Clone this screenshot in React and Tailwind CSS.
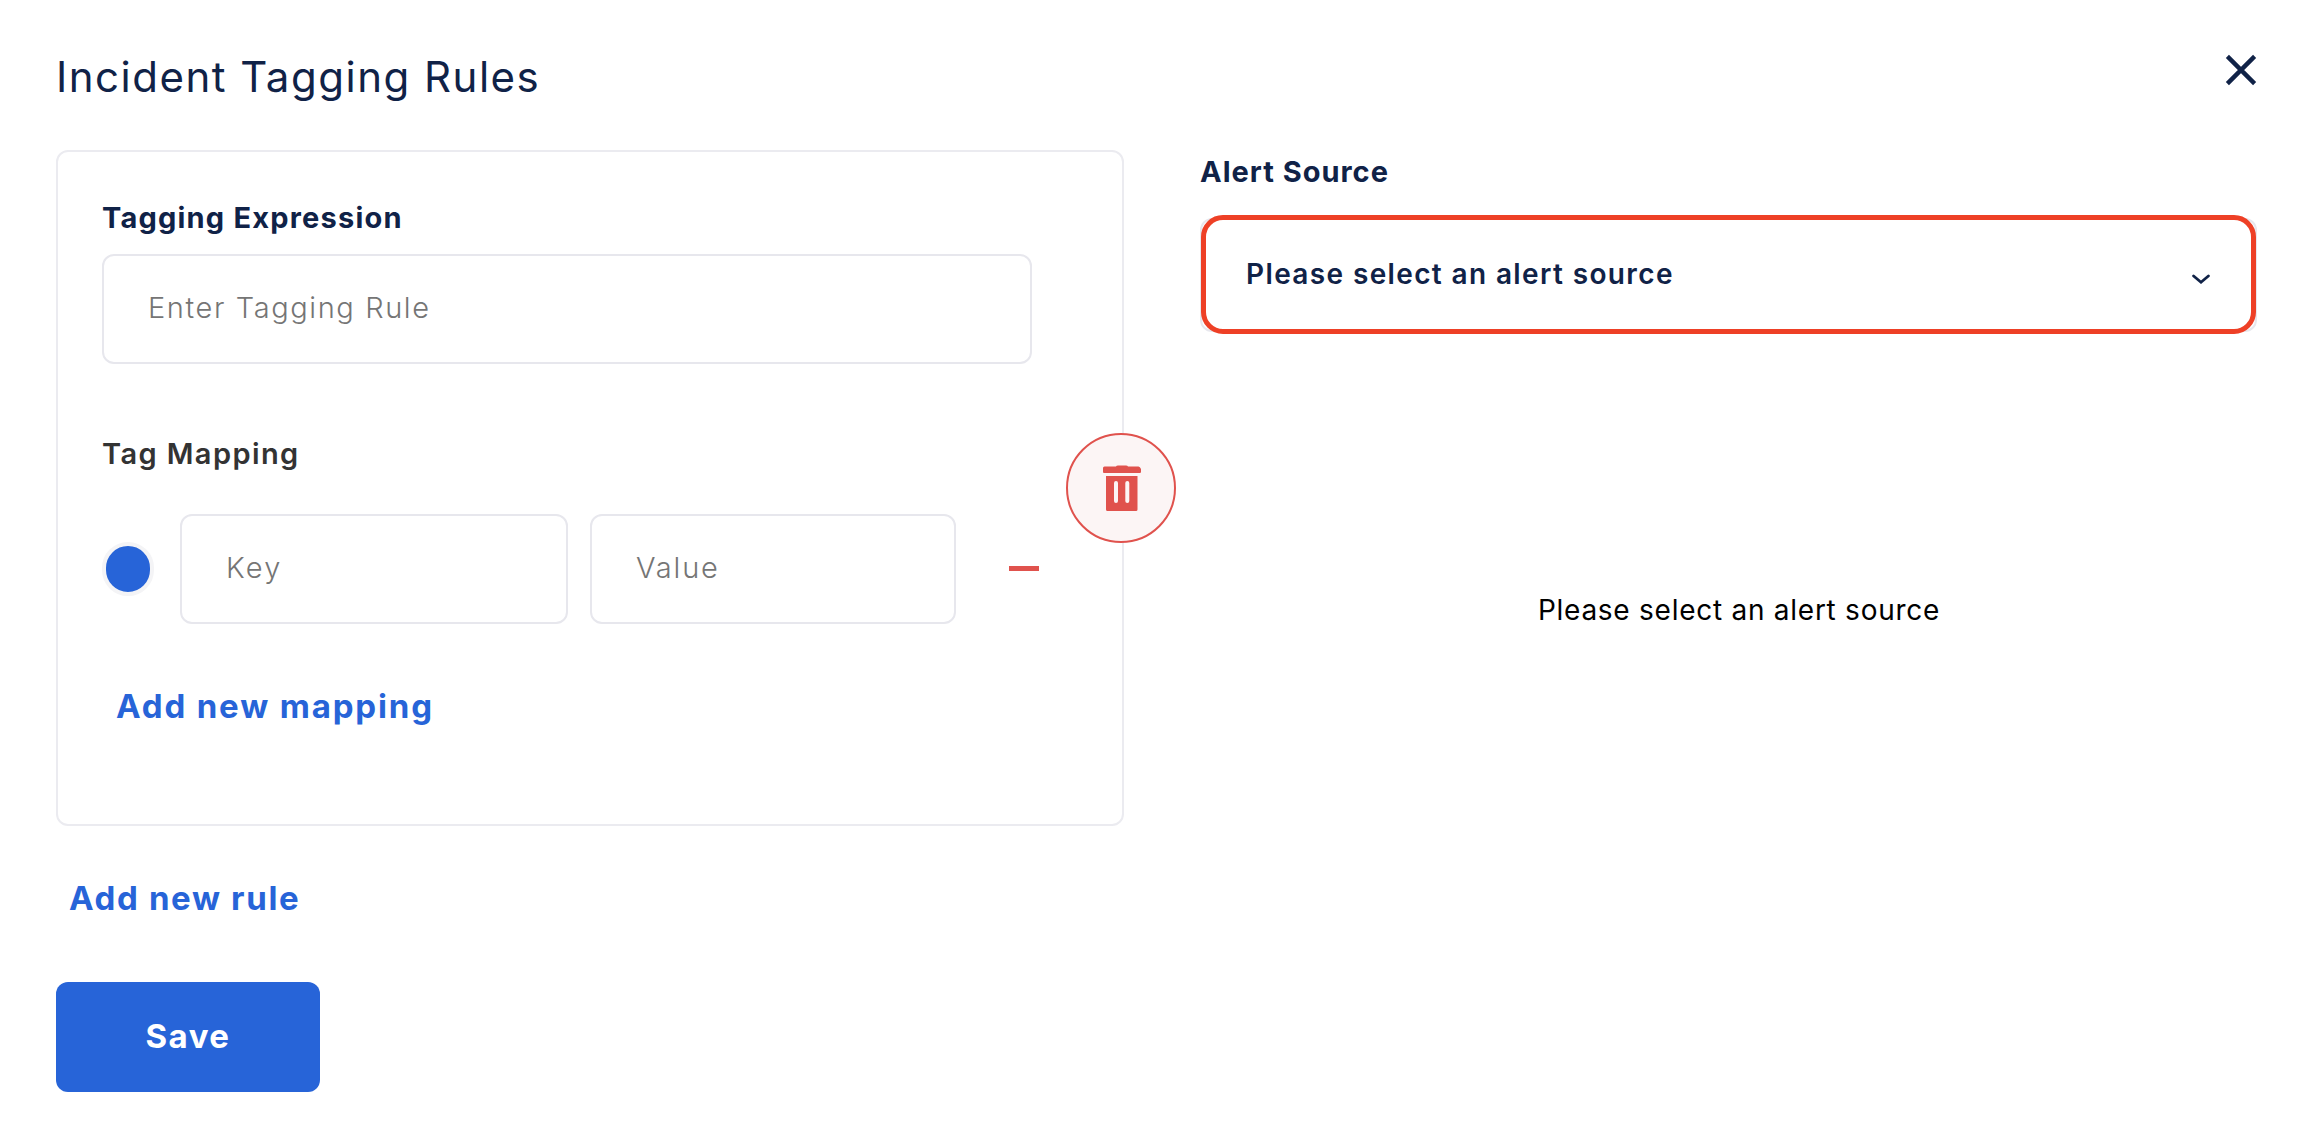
import React from "react";

const field =
  "h-[110px] rounded-xl border-2 border-[#e7e7ed] bg-white pl-[44px] pr-4 pb-[3px] text-[29px] text-[#222] outline-none placeholder:font-[350] placeholder:text-[#757575] placeholder:opacity-100";

function CloseIcon() {
  return (
    <svg width="32" height="32" viewBox="0 0 32 32" fill="none" stroke="#102247" strokeWidth="4.4">
      <path d="M2.4 2.4 29.6 29.6M29.6 2.4 2.4 29.6" />
    </svg>
  );
}

function ChevronIcon() {
  return (
    <svg width="18" height="11" viewBox="0 0 18 11" fill="none" stroke="#102247" strokeWidth="2.8" strokeLinecap="round">
      <path d="M1.6 2 9 8.2 16.4 2" />
    </svg>
  );
}

function TrashIcon() {
  return (
    <svg width="38" height="46" viewBox="0 0 38 46" fill="#e0524d">
      <path d="M13 1.6Q13.4 0.5 15 0.5H23Q24.6 0.5 25 1.6H35.5Q37 1.8 38 4V6.5Q38 8 37 8H1Q0 8 0 7V3Q0 1.8 1.5 1.6Z" />
      <path
        fillRule="evenodd"
        d="M3 11H34.5V44.5Q34.5 46 33 46H4.5Q3 46 3 44.5ZM13 16Q11 16 11 18V36Q11 38 13 38Q15 38 15 36V18Q15 16 13 16ZM24.3 16Q22.3 16 22.3 18V36Q22.3 38 24.3 38Q26.3 38 26.3 36V18Q26.3 16 24.3 16Z"
      />
    </svg>
  );
}

function RuleCard() {
  return (
    <div className="relative flex h-[676px] flex-col rounded-xl border-2 border-[#ebebf0] pt-12 pl-[44px]">
      <label className="h-[35px] text-[29px] leading-[35px] font-bold tracking-[1.2px] text-[#102247]">
        Tagging Expression
      </label>
      <input className={`${field} mt-[19px] w-[930px] tracking-[1.6px]`} placeholder="Enter Tagging Rule" />

      <div className="mt-[72px] h-9 text-[29px] leading-9 font-semibold tracking-[1.4px] text-[#333]">Tag Mapping</div>

      <div className="mt-[42px] flex items-center">
        <span className="h-[54px] w-[52px] rounded-full border-4 border-[#f4f4f6] bg-[#2764d8]" />
        <input className={`${field} ml-[26px] w-[388px] tracking-[2.2px]`} placeholder="Key" />
        <input className={`${field} ml-[22px] w-[366px] tracking-[1.8px]`} placeholder="Value" />
        <button className="mb-[2px] ml-[53px] h-[5px] w-[30px] bg-[#e0524d]" aria-label="Remove mapping" />
      </div>

      <button className="mt-[62px] ml-[14px] h-10 self-start text-[33px] leading-10 font-bold tracking-[1.85px] text-[#2764d8]">
        Add new mapping
      </button>

      <button
        className="absolute top-[281px] -right-[54px] flex size-[110px] items-center justify-center rounded-full border-2 border-[#e0524d] bg-[#fcf5f5] pl-[2px]"
        aria-label="Delete rule"
      >
        <TrashIcon />
      </button>
    </div>
  );
}

function AlertSource() {
  return (
    <section className="flex w-[1057px] flex-col pt-1">
      <h2 className="h-9 text-[29px] leading-9 font-bold tracking-[1px] text-[#102247]">Alert Source</h2>
      <div className="relative mt-7 flex h-[114px] items-center justify-between rounded-xl border-2 border-[#e7e7ed] pr-[45px] pb-[3px] pl-[44px]">
        <span className="text-[28px] leading-9 font-semibold tracking-[1.37px] text-[#102247]">
          Please select an alert source
        </span>
        <span className="mt-3">
          <ChevronIcon />
        </span>
        <span className="pointer-events-none absolute -top-[5px] -right-px -bottom-1 -left-px rounded-[22px] border-[5px] border-[#ee4026]" />
      </div>
      <p className="mt-[260px] pl-[21px] text-center text-[28px] leading-9 tracking-[0.74px] text-black">
        Please select an alert source
      </p>
    </section>
  );
}

export default function App() {
  return (
    <main className="h-[1142px] w-[2314px] overflow-hidden bg-white px-14 pt-[50px] font-['Inter',sans-serif]">
      <header className="flex h-[100px] items-start justify-between">
        <h1 className="text-[42px] leading-[54px] font-[430] tracking-[1.5px] text-[#102247]">Incident Tagging Rules</h1>
        <button className="mt-1 mr-[1px]" aria-label="Close">
          <CloseIcon />
        </button>
      </header>

      <div className="flex gap-[76px]">
        <section className="flex w-[1068px] flex-col items-stretch">
          <RuleCard />
          <button className="mt-[52px] ml-[13px] h-10 self-start text-[33px] leading-10 font-bold tracking-[1.65px] text-[#2764d8]">
            Add new rule
          </button>
          <button className="mt-[64px] h-[110px] w-[264px] self-start rounded-xl bg-[#2764d8] text-[33px] font-bold tracking-[1.5px] text-white">
            Save
          </button>
        </section>
        <AlertSource />
      </div>
    </main>
  );
}
